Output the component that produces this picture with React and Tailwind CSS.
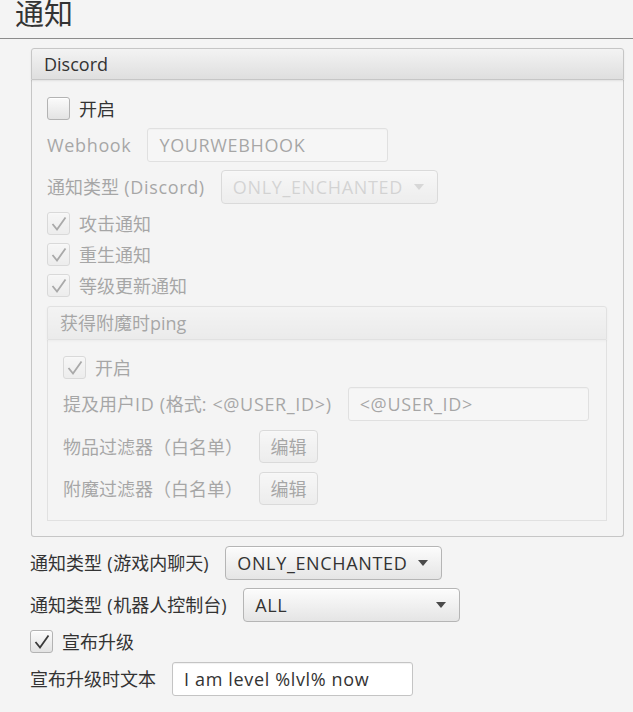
import React from "react";

const FONT = { fontFamily: '"Open Sans", "Noto Sans CJK SC", sans-serif' };

function T({ text }) {
  const parts = text.split(/([\x20-\x7e]+)/).filter((p) => p !== "");
  return (
    <span className="leading-none whitespace-pre">
      {parts.map((p, i) =>
        /^[\x20-\x7e]+$/.test(p) ? (
          <span key={i} className="tracking-[0.65px]">
            {p}
          </span>
        ) : (
          <span key={i}>{p}</span>
        )
      )}
    </span>
  );
}

function Box({ checked }) {
  return (
    <div className="w-[23px] h-[23px] shrink-0 rounded-[3px] border border-[#b3b3b3] bg-linear-to-b from-[#fbfbfb] to-[#e3e3e3] shadow-[inset_0_1px_0_#ffffff] flex items-center justify-center">
      {checked && (
        <svg width="18" height="16" viewBox="0 0 18 16">
          <path d="M2.5 8 L7 13.5 L15.5 1.5" fill="none" stroke="#3a3a3a" strokeWidth="1.8" />
        </svg>
      )}
    </div>
  );
}

function Check({ checked, label }) {
  return (
    <div className="flex items-center gap-[9px] h-[23px]">
      <Box checked={checked} />
      <T text={label} />
    </div>
  );
}

function Field({ value, white }) {
  return (
    <div
      className={`h-[34px] w-[241px] rounded-[3px] border border-[#c4c4c4] ${white ? "bg-white" : "bg-[#fbfbfb]"} shadow-[inset_0_1px_1px_rgba(0,0,0,0.06)] flex items-center pl-[11px]`}
    >
      <T text={value} />
    </div>
  );
}

function Combo({ value, dim }) {
  return (
    <div className="h-[34px] w-[217px] rounded-[4px] border border-[#b5b5b5] bg-linear-to-b from-[#fcfcfc] to-[#e5e5e5] shadow-[inset_0_1px_0_#ffffff] flex items-center justify-between pl-[11px] pr-[13px]">
      <span className={dim ? "opacity-40" : ""}>
        <T text={value} />
      </span>
      <svg width="10" height="6" viewBox="0 0 10 6" className={dim ? "opacity-40" : ""}>
        <path d="M0 0 L10 0 L5 6 Z" fill="#4a4a4a" />
      </svg>
    </div>
  );
}

function Btn({ label }) {
  return (
    <div className="h-[33px] w-[59px] rounded-[4px] border border-[#b5b5b5] bg-linear-to-b from-[#fcfcfc] to-[#e3e3e3] shadow-[inset_0_1px_0_#ffffff] flex items-center justify-center">
      <span className="leading-none">{label}</span>
    </div>
  );
}

function Header({ label, h }) {
  return (
    <div
      className={`${h} rounded-t-[3px] border border-[#c6c6c6] bg-linear-to-b from-[#f3f3f3] to-[#dfdfdf] flex items-center pl-[12px] shadow-[0_1px_2px_rgba(0,0,0,0.08)] relative z-10`}
    >
      <span className="leading-none">{label}</span>
    </div>
  );
}

function Row({ label, children, extra = "" }) {
  return (
    <div className={`flex items-center gap-[16px] ${extra}`}>
      <T text={label} />
      {children}
    </div>
  );
}

export default function App() {
  return (
    <div
      className="w-[633px] h-[712px] overflow-hidden bg-[#f4f4f4] text-[#333333] text-[18px]"
      style={FONT}
    >
      <div className="h-[38px] pl-[15px] flex items-end">
        <span className="text-[29px] leading-none mb-[10px]">通知</span>
      </div>
      <div className="h-px bg-[#8c8c8c]" />

      <div className="ml-[31px] w-[593px] mt-[9px]">
        <Header label="Discord" h="h-[32px]" />
        <div className="border border-t-0 border-[#c6c6c6] rounded-b-[3px] pt-[17px] pb-[15px] px-[15px] flex flex-col gap-[8px]">
          <Check checked={false} label="开启" />
          <div className="opacity-40 flex flex-col gap-[8px]">
            <Row label="Webhook">
              <Field value="YOURWEBHOOK" />
            </Row>
            <Row label="通知类型 (Discord)">
              <Combo value="ONLY_ENCHANTED" dim />
            </Row>
            <Check checked label="攻击通知" />
            <Check checked label="重生通知" />
            <Check checked label="等级更新通知" />
            <div className="mt-[1px] mr-[1px]">
              <Header label="获得附魔时ping" h="h-[34px]" />
              <div className="border border-t-0 border-[#c6c6c6] pt-[16px] pb-[15px] px-[15px] flex flex-col gap-[8px]">
                <Check checked label="开启" />
                <Row label="提及用户ID (格式: <@USER_ID>)">
                  <Field value="<@USER_ID>" />
                </Row>
                <Row label="物品过滤器（白名单）" extra="mt-[1px]">
                  <Btn label="编辑" />
                </Row>
                <Row label="附魔过滤器（白名单）" extra="mt-[1px]">
                  <Btn label="编辑" />
                </Row>
              </div>
            </div>
          </div>
        </div>
      </div>

      <div className="pl-[30px] pt-[9px] flex flex-col gap-[8px]">
        <Row label="通知类型 (游戏内聊天)">
          <Combo value="ONLY_ENCHANTED" />
        </Row>
        <Row label="通知类型 (机器人控制台)">
          <Combo value="ALL" />
        </Row>
        <Check checked label="宣布升级" />
        <Row label="宣布升级时文本" extra="mt-[1px]">
          <Field value="I am level %lvl% now" white />
        </Row>
      </div>
    </div>
  );
}
